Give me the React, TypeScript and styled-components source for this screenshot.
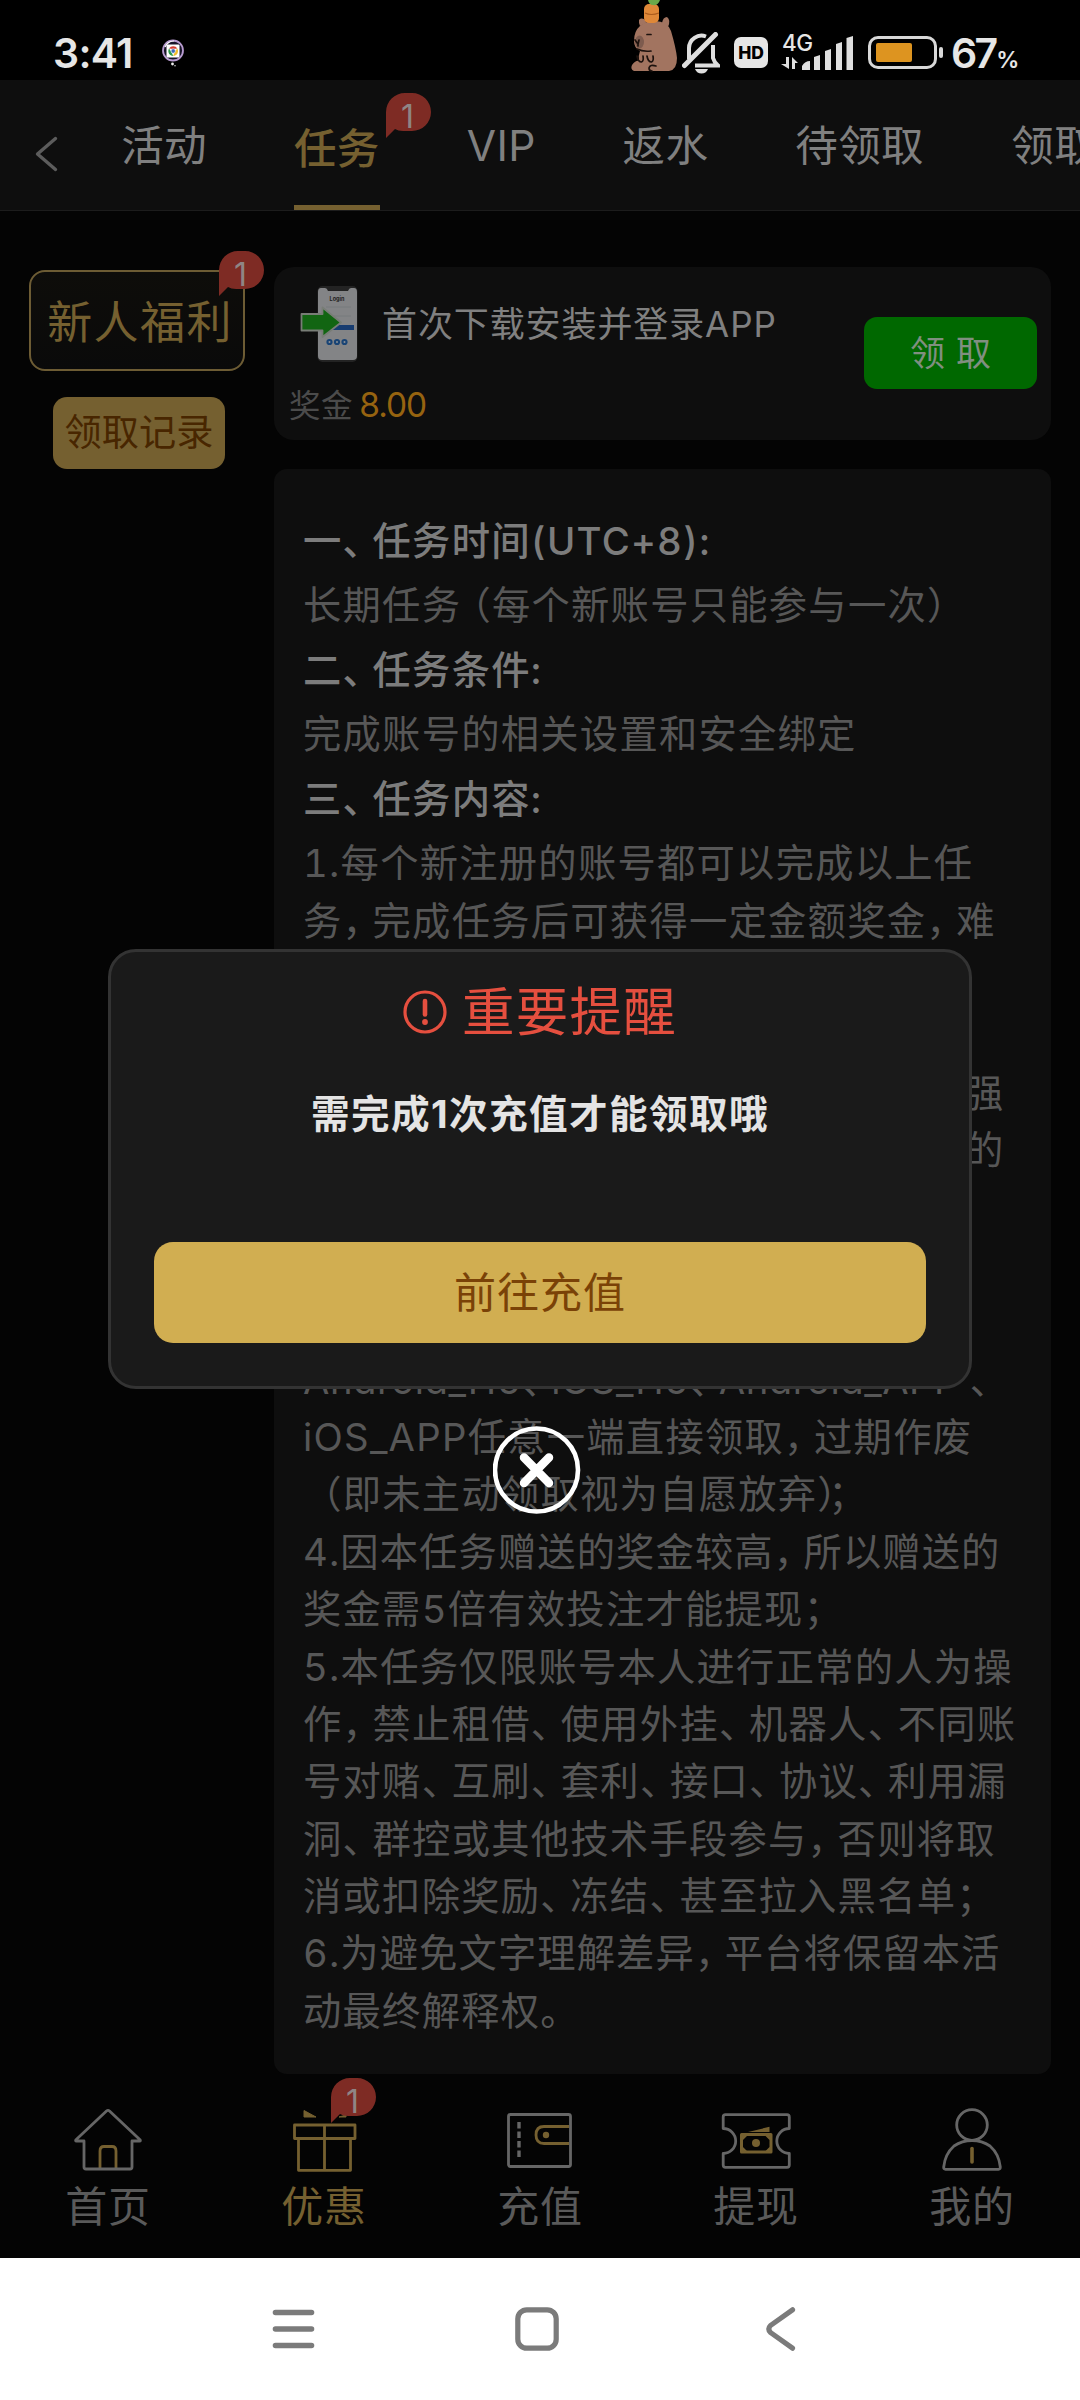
import React from "react";
import styled, { createGlobalStyle } from "styled-components";

const GlobalStyle = createGlobalStyle`
  * { box-sizing: border-box; }
  html, body { margin: 0; padding: 0; background: #040404; }
  body { font-family: Inter, "Noto Sans CJK SC", sans-serif; overflow: hidden; }
  svg { display: block; flex: none; }
`;

const GOLD = "#756030";
const GREY = "#666666";

const Screen = styled.div`
  position: relative;
  width: 1080px;
  height: 2400px;
  display: flex;
  flex-direction: column;
  background: #040404;
  overflow: hidden;
`;

/* ---------- status bar ---------- */

const StatusBar = styled.div`
  height: 80px;
  flex: none;
  display: flex;
  align-items: flex-start;
  justify-content: space-between;
  padding: 0 64px 0 53px;
  background: #000;
  color: #e6e6e6;
`;

const StatusGroup = styled.div`
  display: flex;
  align-items: flex-start;
`;

const Clock = styled.span`
  margin-top: 28px;
  width: 82px;
  font-size: 41px;
  line-height: 50px;
  font-weight: 600;
  letter-spacing: -0.7px;
  white-space: nowrap;
`;

const IconSlot = styled.span<{ $top: number; $left: number }>`
  display: block;
  margin-top: ${(p) => p.$top}px;
  margin-left: ${(p) => p.$left}px;
`;

const HdBox = styled.span`
  display: flex;
  align-items: center;
  justify-content: center;
  width: 34px;
  height: 31px;
  margin: 37px 0 0 14px;
  border-radius: 7px;
  background: #e6e6e6;
  color: #000;
  font-size: 17.5px;
  font-weight: 800;
`;

const Signal = styled.div`
  position: relative;
  width: 72px;
  height: 36px;
  margin: 35px 0 0 13px;
`;

const NetLabel = styled.span`
  position: absolute;
  left: 1px;
  top: -4px;
  font-size: 22.5px;
  line-height: 24px;
  font-weight: 500;
  letter-spacing: -0.4px;
`;

const Battery = styled.div`
  display: flex;
  align-items: center;
  gap: 2px;
  margin: 36px 0 0 15px;
`;

const BatteryShell = styled.div`
  width: 69px;
  height: 33px;
  padding: 4px 5px;
  border: 3px solid #d8d8d8;
  border-radius: 10px;
`;

const BatteryFill = styled.div`
  width: 36px;
  height: 19px;
  border-radius: 2px;
  background: #dd9420;
`;

const BatteryNub = styled.div`
  width: 4px;
  height: 11px;
  border-radius: 2px;
  background: #d8d8d8;
`;

const Percent = styled.div`
  display: flex;
  align-items: baseline;
  width: 65px;
  margin: 28px 0 0 8px;
  font-size: 41px;
  line-height: 50px;
  font-weight: 600;
  letter-spacing: -2.8px;
  white-space: nowrap;
`;

const PercentSign = styled.span`
  font-size: 23px;
  font-weight: 600;
  margin-left: 1px;
`;

/* ---------- header tabs ---------- */

const Header = styled.header`
  height: 131px;
  flex: none;
  display: flex;
  align-items: stretch;
  border-bottom: 1px solid #1c1c1c;
  background: #0e0e0e;
  overflow: hidden;
`;

const BackButton = styled.div`
  width: 121.2px;
  flex: none;
  padding: 56px 0 0 34px;
`;

const Tabs = styled.nav`
  display: flex;
  gap: 86.4px;
`;

const Tab = styled.div<{ $active?: boolean; $width: number }>`
  position: relative;
  flex: none;
  width: ${(p) => p.$width}px;
  padding-top: ${(p) => (p.$active ? 39 : 36)}px;
  font-size: 42.5px;
  line-height: 60px;
  letter-spacing: 0.4px;
  white-space: nowrap;
  font-weight: ${(p) => (p.$active ? 500 : 400)};
  color: ${(p) => (p.$active ? GOLD : "#808080")};
  border-bottom: ${(p) => (p.$active ? `5px solid ${GOLD}` : "0")};
`;

const BadgeBox = styled.span<{ $left: number; $top: number }>`
  position: absolute;
  left: ${(p) => p.$left}px;
  top: ${(p) => p.$top}px;
  width: 45px;
  height: 45px;
`;

const BadgeCount = styled.span`
  position: absolute;
  left: 0;
  top: 4px;
  width: 43px;
  text-align: center;
  font-size: 32px;
  line-height: 40px;
  font-weight: 400;
  letter-spacing: 0;
  color: #8f8585;
`;

/* ---------- content ---------- */

const Content = styled.div`
  flex: 1;
  display: flex;
  align-items: flex-start;
  gap: 29px;
  padding: 56px 29px 0 29px;
`;

const Sidebar = styled.aside`
  width: 216px;
  flex: none;
  display: flex;
  flex-direction: column;
  align-items: center;
  gap: 26px;
  padding-top: 3px;
`;

const SideTab = styled.div`
  position: relative;
  width: 216px;
  height: 101px;
  display: flex;
  justify-content: center;
  padding-left: 6px;
  border: 2px solid #6d5c34;
  border-radius: 16px;
  background: linear-gradient(#0e0d0a, #0a0a0a);
  color: ${GOLD};
  font-size: 45px;
  line-height: 101px;
  letter-spacing: 1.4px;
  font-weight: 400;
  white-space: nowrap;
`;

const RecordButton = styled.div`
  width: 172px;
  height: 72px;
  margin-left: 4px;
  border-radius: 14px;
  background: ${GOLD};
  color: #482600;
  text-align: center;
  font-size: 37.2px;
  line-height: 72px;
  white-space: nowrap;
`;

const Main = styled.main`
  flex: 1;
  display: flex;
  flex-direction: column;
  gap: 29px;
`;

const TaskCard = styled.section`
  height: 173px;
  display: flex;
  align-items: flex-start;
  justify-content: space-between;
  padding: 0 14px 0 15px;
  border-radius: 20px;
  background: #0e0e0e;
`;

const TaskInfo = styled.div`
  padding-top: 14px;
`;

const TaskTitle = styled.div`
  display: flex;
  align-items: flex-start;
  height: 92px;
  gap: 10px;
  color: #808080;
  font-size: 35px;
  line-height: 86px;
  letter-spacing: 0.9px;
  white-space: nowrap;
`;

const Bonus = styled.div`
  display: flex;
  align-items: baseline;
  gap: 6px;
  font-size: 31.5px;
  line-height: 64px;
  letter-spacing: 0.6px;
  color: #4b4b4b;
`;

const BonusValue = styled.span`
  font-size: 33.5px;
  letter-spacing: -1px;
  color: #966310;
`;

const ClaimButton = styled.div`
  width: 173px;
  height: 72px;
  margin-top: 50px;
  border-radius: 13px;
  background: #006800;
  color: #808f80;
  text-align: center;
  font-size: 35px;
  line-height: 73px;
  word-spacing: 1px;
  white-space: pre;
`;

const Rules = styled.section`
  height: 1605px;
  padding: 39.5px 0 0 29px;
  border-radius: 13px;
  background: #0e0e0e;
  font-size: 38.3px;
  letter-spacing: 1.25px;
  font-variant-numeric: tabular-nums;
  white-space: nowrap;
`;

const RuleHead = styled.h3`
  height: 64.6px;
  margin: 0;
  font-size: inherit;
  line-height: 64.6px;
  font-weight: 500;
  color: #7c7c7c;
`;

const RuleNote = styled.p`
  height: 64.6px;
  margin: 0;
  line-height: 64.6px;
  color: #575757;
`;

const RuleList = styled.div`
  padding-top: 4px;
  color: #575757;
`;

const RuleLine = styled.div<{ $indent?: number; $tracking?: number }>`
  height: 57.37px;
  line-height: 57.37px;
  padding-left: ${(p) => p.$indent || 0}px;
  letter-spacing: ${(p) => p.$tracking ?? 1.25}px;
`;

const Close = styled.span`
  margin-right: -0.25em;
`;

const Open = styled.span`
  margin-left: -0.23em;
`;

/* ---------- bottom navigation ---------- */

const BottomNav = styled.nav`
  height: 184px;
  flex: none;
  display: grid;
  grid-template-columns: repeat(5, 1fr);
`;

const NavItem = styled.div<{ $active?: boolean }>`
  position: relative;
  display: flex;
  flex-direction: column;
  align-items: center;
  padding-top: 31px;
  font-size: 42px;
  line-height: 64px;
  letter-spacing: 0.8px;
  color: ${(p) => (p.$active ? GOLD : "#5a5a5a")};
`;

const SystemNav = styled.div`
  height: 142px;
  flex: none;
  display: flex;
  align-items: flex-start;
  padding: 47px 0 0 270px;
  gap: 197px;
  background: #fff;
`;

/* ---------- dialog ---------- */

const Overlay = styled.div`
  position: absolute;
  inset: 0;
  display: flex;
  flex-direction: column;
  align-items: center;
  gap: 37px;
  padding-top: 949px;
`;

const Dialog = styled.div`
  width: 864px;
  height: 440px;
  display: flex;
  flex-direction: column;
  align-items: center;
  padding: 22px 43px 0;
  border: 3px solid #333;
  border-radius: 28px;
  background: #1a1a1a;
`;

const DialogTitle = styled.div`
  display: flex;
  align-items: center;
  gap: 15px;
  height: 76px;
  font-size: 52.5px;
  line-height: 76px;
  letter-spacing: 1.2px;
  color: #e54f3f;
`;

const DialogText = styled.div`
  height: 60px;
  margin-top: 34px;
  font-size: 38.6px;
  line-height: 60px;
  font-weight: 700;
  letter-spacing: 1.4px;
  color: #e4e4e4;
`;

const DialogButton = styled.div`
  width: 772px;
  height: 101px;
  margin-top: 98px;
  border-radius: 19px;
  background: #d1ae51;
  color: #7a4207;
  text-align: center;
  font-size: 42px;
  line-height: 101px;
  letter-spacing: 1px;
`;

/* Fullwidth punctuation is set tighter than a full em. */
function Tight({ children }: { children: string }) {
  return (
    <>
      {children.split(/([、，；（）。])/).map((part, i) => {
        if (part === "（") return <Open key={i}>{part}</Open>;
        if (/^[、，；）。]$/.test(part)) return <Close key={i}>{part}</Close>;
        return part;
      })}
    </>
  );
}

function Badge({ left, top }: { left: number; top: number }) {
  return (
    <BadgeBox $left={left} $top={top}>
      <svg width="45" height="45" viewBox="0 0 45 45">
        <path
          d="M0 19A19 19 0 0 1 19 0H26A19 19 0 0 1 26 38H17Q12 38 9 36L0 45Z"
          fill="#7e2b24"
        />
      </svg>
      <BadgeCount>1</BadgeCount>
    </BadgeBox>
  );
}

const BubbleIcon = () => (
  <svg width="24" height="30" viewBox="0 0 24 30">
    <circle cx="12" cy="11.5" r="10" fill="#191428" stroke="#b79bd0" strokeWidth="1.8" />
    <path d="M4 8Q7 2 13 2" stroke="#fff" strokeWidth="1.2" fill="none" />
    <rect x="5.5" y="5.5" width="13" height="13" rx="1" fill="#fff" />
    <path d="M8 9.5A5 5 0 0 1 16.4 9.6L12 10Z" fill="#d63b2f" />
    <path d="M16.4 9.6A5 5 0 0 1 12.2 17L14 12Z" fill="#f0bd2c" />
    <path d="M12.2 17A5 5 0 0 1 8 9.5L10.5 13Z" fill="#2f9a4c" />
    <circle cx="12.2" cy="12" r="2.2" fill="#3c69b8" stroke="#fff" strokeWidth=".6" />
    <circle cx="11.5" cy="25" r="1.4" fill="#eee" />
    <circle cx="14" cy="26.8" r=".8" fill="#ccc" />
  </svg>
);

const Capybara = () => (
  <svg width="50" height="74" viewBox="0 0 50 74">
    <path d="M11 26Q8 18 13 18.500Q17 19 17 23ZM33 23Q34 17 38 17Q42 20 39 27Z" fill="#a27460" />
    <path
      d="M11 26Q16 21 26 21Q38 21 42 31Q47 48 48 58Q48 70 40 71H5Q1 69 3 65Q7 60 10 61Q9 56 11 51Q5 48 5 41Q5 31 11 26Z"
      fill="#a27460"
    />
    <ellipse cx="10.500" cy="42" rx="4.500" ry="6.500" fill="#7d5b4e" />
    <path
      d="M6 40L9 44L10 40M9 44V46M18 34.500H22M8 49Q14 52 22 51M8 56Q9 62 12.500 62Q15 61 14 56M18 56Q19 62 22.500 62Q25 61 24 56M27 66Q21 64 20 68Q20 71 23 71"
      stroke="#1d120e"
      strokeWidth="1.7"
      fill="none"
      strokeLinecap="round"
    />
    <rect x="15" y="4" width="15" height="19" rx="5" fill="#df8838" />
    <path d="M16 13Q22 16 30 13" stroke="#a95a1d" strokeWidth="1.2" fill="none" />
    <path d="M19 0Q20 5 24 5Q29 6 31 0Z" fill="#6aa84a" />
  </svg>
);

const BellOff = () => (
  <svg width="38" height="42" viewBox="0 0 38 42" fill="none" stroke="#dedede">
    <path d="M7 27V16A12.500 12.500 0 0 1 24 4.500M31 13V26Q32 30 36 33.500H13" strokeWidth="4" />
    <path d="M2.500 33.500L33.500 2.500" strokeWidth="5" strokeLinecap="round" />
    <path d="M13 37H26Q24 41.500 19.500 41.500Q15 41.500 13 37Z" fill="#dedede" stroke="none" />
  </svg>
);

const SignalBars = () => (
  <svg width="72" height="36" viewBox="0 0 72 36" fill="#dedede">
    <path d="M21 31Q24 26 29 26V35H21ZM33 22L39 20V35H33ZM44 16L50 14V35H44ZM55 9L61 7V35H55ZM65.500 3L72 1V35H65.500Z" />
    <path d="M5 22H8V34L0 29H5ZM11 34V22L17 28H14V34Z" />
  </svg>
);

const PhoneIcon = () => (
  <svg width="83" height="86" viewBox="0 0 83 86">
    <rect x="28.500" y="5" width="40" height="76" rx="5" fill="#232323" />
    <path
      d="M32 7H36Q38 7 39 10H59Q60 7 62 7H65Q68 7 68 11V75Q68 79 64 79H33Q29 79 29 75V11Q29 7 32 7Z"
      fill="#838486"
    />
    <rect x="38" y="44" width="27" height="5" fill="#173c70" />
    <text x="48" y="20" textAnchor="middle" fontSize="5.500" fontWeight="700" fill="#222" letterSpacing="0" fontFamily="Inter, sans-serif">
      Login
    </text>
    <path d="M37 26H62M37 35H62" stroke="#777a7c" strokeWidth="1" />
    {[40.5, 48, 55.5].map((cx) => (
      <g key={cx}>
        <circle cx={cx} cy="61" r="3.100" fill="#194475" />
        <circle cx={cx} cy="61" r="1" fill="#8b9096" />
      </g>
    ))}
    <path d="M12.500 33H33.500V26.500L52 41.500L33.500 56V49.500H12.500Z" fill="#126512" stroke="#787d76" strokeWidth="1.800" strokeLinejoin="round" />
  </svg>
);

const navSvg = {
  width: 80,
  height: 70,
  viewBox: "0 0 80 70",
  fill: "none",
  stroke: GREY,
  strokeWidth: 2.8,
  strokeLinejoin: "round" as const,
};

const HomeIcon = () => (
  <svg {...navSvg}>
    <path d="M32 63V46Q32 41.500 36 41.500H44Q48 41.500 48 46V63" stroke={GOLD} />
    <path d="M16 36H8.500Q7 36 8 34.700L38.500 6Q40 4.700 41.500 6L72 34.700Q73 36 71.500 36H64V62Q64 64 62 64H18Q16 64 16 62Z" />
  </svg>
);

const GiftIcon = () => (
  <svg {...navSvg} stroke={GOLD}>
    <path d="M10.500 20H71V33.500H10.500ZM14.500 33.500H66.500V65.300H14.500ZM40.500 20V65" />
    <path d="M20 12V5.500L32 12ZM55 12H62V10Z" fill={GOLD} strokeWidth="1" />
  </svg>
);

const WalletIcon = () => (
  <svg {...navSvg}>
    <path d="M69 21.500H44Q36 21.500 36 30T44 38.500H69" stroke={GOLD} />
    <rect x="8.500" y="9.500" width="62" height="52" rx="2" />
    <path d="M19 17V23.500M19 26.500V33M19 36V42.500M19 45.500V52" strokeWidth="3.400" />
    <circle cx="46" cy="30" r="3.200" fill={GOLD} stroke="none" />
  </svg>
);

const TicketIcon = () => (
  <svg {...navSvg}>
    <path d="M7.200 12Q7.200 9.700 9.500 9.700H71Q73.300 9.700 73.300 12V23.500A12.500 12.500 0 0 0 73.300 48.500V60Q73.300 62.300 71 62.300H9.500Q7.200 62.300 7.200 60V48.500A12.500 12.500 0 0 0 7.200 23.500Z" />
    <path d="M32 27L53.500 21.800V27Z" fill={GOLD} stroke="none" />
    <rect x="25.500" y="29.500" width="29.500" height="17.500" stroke={GOLD} strokeWidth="3" />
    <path d="M26 34L30 30M54.500 34L50.500 30M26 43L30 47M54.500 43L50.500 47" stroke={GOLD} />
    <circle cx="40" cy="38" r="4" fill={GOLD} stroke="none" />
  </svg>
);

const PersonIcon = () => (
  <svg {...navSvg}>
    <circle cx="40" cy="20" r="15.300" />
    <path d="M11.700 62Q13 49 22 41Q30 35.500 40 35.500T58 41Q67 49 68.300 62Q68.500 64.300 66.500 64.300H13.500Q11.500 64.300 11.700 62Z" />
    <path d="M40 43.500V57" stroke={GOLD} strokeWidth="3.600" strokeLinecap="round" />
  </svg>
);

const NAV = [
  { label: "首页", Icon: HomeIcon },
  { label: "优惠", Icon: GiftIcon, active: true },
  { label: "充值", Icon: WalletIcon },
  { label: "提现", Icon: TicketIcon },
  { label: "我的", Icon: PersonIcon },
];

const TABS = [
  { label: "活动", width: 86.4 },
  { label: "任务", width: 86.4, active: true },
  { label: "VIP", width: 69.4 },
  { label: "返水", width: 86.4 },
  { label: "待领取", width: 129.6 },
  { label: "领取记录", width: 172.8 },
];

const RULES: { text: string; indent?: number; tracking?: number }[] = [
  { text: "1.每个新注册的账号都可以完成以上任" },
  { text: "务，完成任务后可获得一定金额奖金，难" },
  { text: "" },
  { text: "" },
  { text: "强", indent: 662 },
  { text: "的", indent: 662 },
  { text: "" },
  { text: "" },
  { text: "" },
  { text: "Android_H5、iOS_H5、Android_APP 、", tracking: 0.5 },
  { text: "iOS_APP任意一端直接领取，过期作废" },
  { text: "（即未主动领取视为自愿放弃）；", indent: 9 },
  { text: "4.因本任务赠送的奖金较高，所以赠送的", tracking: 1.1 },
  { text: "奖金需5倍有效投注才能提现；" },
  { text: "5.本任务仅限账号本人进行正常的人为操" },
  { text: "作，禁止租借、使用外挂、机器人、不同账" },
  { text: "号对赌、互刷、套利、接口、协议、利用漏" },
  { text: "洞、群控或其他技术手段参与，否则将取" },
  { text: "消或扣除奖励、冻结、甚至拉入黑名单；" },
  { text: "6.为避免文字理解差异，平台将保留本活", tracking: 1.1 },
  { text: "动最终解释权。" },
];

export default function App() {
  return (
    <>
      <GlobalStyle />
      <Screen>
        <StatusBar>
          <StatusGroup>
            <Clock>3:41</Clock>
            <IconSlot $top={39} $left={26}>
              <BubbleIcon />
            </IconSlot>
          </StatusGroup>
          <StatusGroup>
            <IconSlot $top={0} $left={0}>
              <Capybara />
            </IconSlot>
            <IconSlot $top={32} $left={3}>
              <BellOff />
            </IconSlot>
            <HdBox>HD</HdBox>
            <Signal>
              <NetLabel>4G</NetLabel>
              <SignalBars />
            </Signal>
            <Battery>
              <BatteryShell>
                <BatteryFill />
              </BatteryShell>
              <BatteryNub />
            </Battery>
            <Percent>
              67<PercentSign>%</PercentSign>
            </Percent>
          </StatusGroup>
        </StatusBar>

        <Header>
          <BackButton>
            <svg width="26" height="36" viewBox="0 0 26 36" fill="none" stroke="#5c5c5c" strokeWidth="3.400" strokeLinecap="round" strokeLinejoin="round">
              <path d="M21.500 2.500L3.500 18L21.500 33.500" />
            </svg>
          </BackButton>
          <Tabs>
            {TABS.map((t) => (
              <Tab key={t.label} $active={t.active} $width={t.width}>
                {t.label}
                {t.active && <Badge left={92} top={13} />}
              </Tab>
            ))}
          </Tabs>
        </Header>

        <Content>
          <Sidebar>
            <SideTab>
              新人福利
              <Badge left={188} top={-21} />
            </SideTab>
            <RecordButton>领取记录</RecordButton>
          </Sidebar>
          <Main>
            <TaskCard>
              <TaskInfo>
                <TaskTitle>
                  <PhoneIcon />
                  首次下载安装并登录APP
                </TaskTitle>
                <Bonus>
                  奖金<BonusValue>8.00</BonusValue>
                </Bonus>
              </TaskInfo>
              <ClaimButton>领 取</ClaimButton>
            </TaskCard>
            <Rules>
              <RuleHead>
                <Tight>一、任务时间(UTC+8):</Tight>
              </RuleHead>
              <RuleNote>
                <Tight>长期任务（每个新账号只能参与一次）</Tight>
              </RuleNote>
              <RuleHead>
                <Tight>二、任务条件:</Tight>
              </RuleHead>
              <RuleNote>完成账号的相关设置和安全绑定</RuleNote>
              <RuleHead>
                <Tight>三、任务内容:</Tight>
              </RuleHead>
              <RuleList>
                {RULES.map((r, i) => (
                  <RuleLine key={i} $indent={r.indent} $tracking={r.tracking}>
                    <Tight>{r.text}</Tight>
                  </RuleLine>
                ))}
              </RuleList>
            </Rules>
          </Main>
        </Content>

        <BottomNav>
          {NAV.map(({ label, Icon, active }) => (
            <NavItem key={label} $active={active}>
              <Icon />
              {label}
              {active && <Badge left={115} top={4} />}
            </NavItem>
          ))}
        </BottomNav>

        <SystemNav>
          <svg width="48" height="46" viewBox="0 0 48 46" stroke="#7b7b7b" strokeWidth="5.600" strokeLinecap="round">
            <path d="M5.500 7.500H41.500M5.500 24H41.500M5.500 40.500H41.500" />
          </svg>
          <svg width="44" height="46" viewBox="0 0 44 46" fill="none" stroke="#7b7b7b" strokeWidth="5.200">
            <rect x="2.800" y="4.800" width="38.400" height="38.400" rx="9" />
          </svg>
          <svg width="40" height="48" viewBox="0 0 40 48" fill="none" stroke="#7b7b7b" strokeWidth="5.200" strokeLinecap="round" strokeLinejoin="round">
            <path d="M36.500 4.800L14.500 20.500Q11 24 14.500 27.500L36.500 43.200" />
          </svg>
        </SystemNav>

        <Overlay>
          <Dialog>
            <DialogTitle>
              <svg width="44" height="44" viewBox="0 0 44 44" fill="none" stroke="#e54f3f">
                <circle cx="22" cy="22" r="20" strokeWidth="3.200" />
                <path d="M22 11V24.500" strokeWidth="4.600" strokeLinecap="round" />
                <circle cx="22" cy="32" r="2.900" fill="#e54f3f" stroke="none" />
              </svg>
              重要提醒
            </DialogTitle>
            <DialogText>需完成1次充值才能领取哦</DialogText>
            <DialogButton>前往充值</DialogButton>
          </Dialog>
          <svg width="94" height="88" viewBox="3 0 94 88" fill="none" stroke="#fff">
            <circle cx="46.500" cy="44" r="41.500" strokeWidth="4.600" />
            <path d="M34 31.500L59 57M59 31.500L34 57" strokeWidth="8.500" strokeLinecap="round" />
          </svg>
        </Overlay>
      </Screen>
    </>
  );
}
